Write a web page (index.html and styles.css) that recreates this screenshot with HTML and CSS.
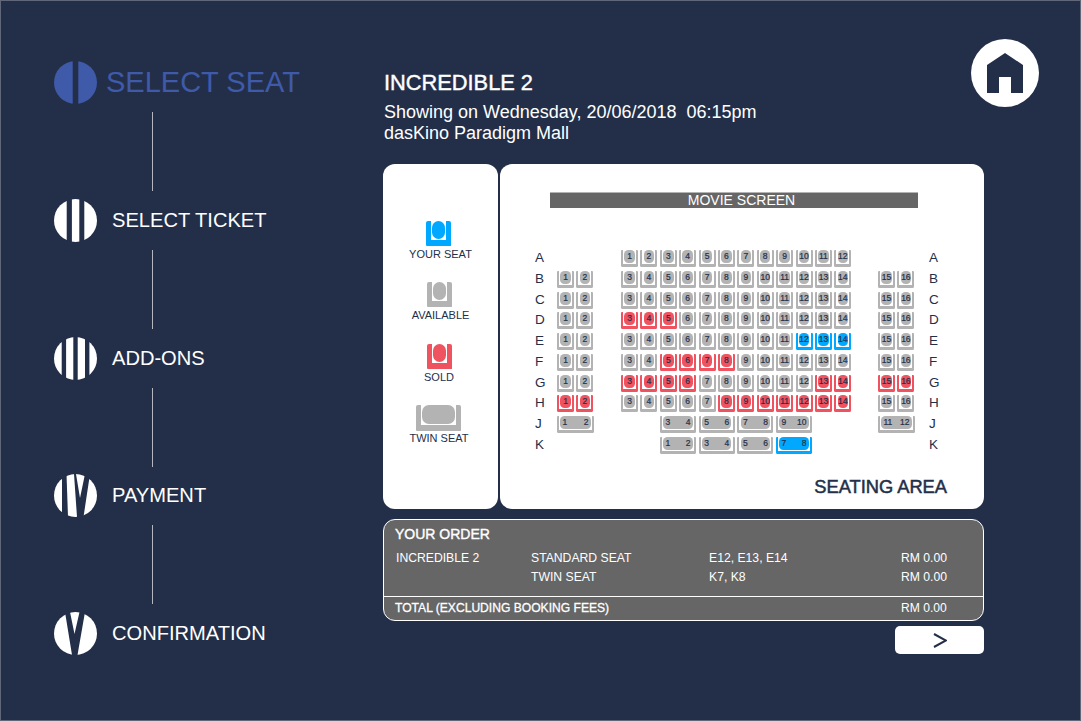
FILE: index.html
```html
<!DOCTYPE html>
<html>
  <head>
    <meta charset="utf-8">
    <title>Select Seat</title>
    <link rel="stylesheet" href="styles.css">
  </head>
  <body>
    <div class="page">
      <ul class="steps">
        <li class="step current">
          <svg class="step-icon" viewBox="0 0 43 43"><circle cx="21.5" cy="21.5" r="21.5"/><rect class="cut" x="18.7" width="5.6" height="43"/></svg>
          <span>SELECT SEAT</span>
        </li>
        <li class="step-line"></li>
        <li class="step">
          <svg class="step-icon" viewBox="0 0 43 43"><circle cx="21.5" cy="21.5" r="21.5"/><rect class="cut" x="12.7" width="5.2" height="43"/><rect class="cut" x="25.3" width="5" height="43"/></svg>
          <span>SELECT TICKET</span>
        </li>
        <li class="step-line"></li>
        <li class="step">
          <svg class="step-icon" viewBox="0 0 43 43"><circle cx="21.5" cy="21.5" r="21.5"/><rect class="cut" x="7.7" width="4.4" height="43"/><rect class="cut" x="19.3" width="4.4" height="43"/><rect class="cut" x="31" width="4.4" height="43"/></svg>
          <span>ADD-ONS</span>
        </li>
        <li class="step-line"></li>
        <li class="step">
          <svg class="step-icon" viewBox="0 0 43 43"><circle cx="21.5" cy="21.5" r="21.5"/><polygon class="cut" points="8,0 12.5,0 14,43 8,43"/><polygon class="cut" points="20,0 22,0 26,24 31,0 36,0 29.5,43 23,43"/></svg>
          <span>PAYMENT</span>
        </li>
        <li class="step-line"></li>
        <li class="step">
          <svg class="step-icon" viewBox="0 0 43 43"><circle cx="21.5" cy="21.5" r="21.5"/><polygon class="cut" points="11,0 16,0 20.5,22 25.5,0 31,0 23.5,43 18,43"/></svg>
          <span>CONFIRMATION</span>
        </li>
      </ul>

      <div class="content">
        <div class="header">
          <div class="movie">
            <h1>INCREDIBLE 2</h1>
            <p>Showing on Wednesday, 20/06/2018  06:15pm</p>
            <p>dasKino Paradigm Mall</p>
          </div>
          <svg class="home" viewBox="0 0 68 68"><circle cx="34" cy="34" r="34" fill="#fff"/><path d="M16 26 34 14 52 26V54H40V38H28V54H16Z" fill="#232f49"/></svg>
        </div>

        <div class="panels">
          <div class="legend">
            <div class="legend-item"><div class="seat big mine"></div><label>YOUR SEAT</label></div>
            <div class="legend-item"><div class="seat big"></div><label>AVAILABLE</label></div>
            <div class="legend-item"><div class="seat big sold"></div><label class="shift">SOLD</label></div>
            <div class="legend-item"><div class="seat big-twin"></div><label class="shift">TWIN SEAT</label></div>
          </div>

          <div class="map">
            <div class="screen">MOVIE SCREEN</div>
            <div class="rows">
              <div class="row">
                <b>A</b><div class="left"></div>
                <div class="mid"><div class="seat">1</div><div class="seat">2</div><div class="seat">3</div><div class="seat">4</div><div class="seat">5</div><div class="seat">6</div><div class="seat">7</div><div class="seat">8</div><div class="seat">9</div><div class="seat">10</div><div class="seat">11</div><div class="seat">12</div></div>
                <div class="right"></div><b>A</b>
              </div>
              <div class="row">
                <b>B</b><div class="left"><div class="seat">1</div><div class="seat">2</div></div>
                <div class="mid"><div class="seat">3</div><div class="seat">4</div><div class="seat">5</div><div class="seat">6</div><div class="seat">7</div><div class="seat">8</div><div class="seat">9</div><div class="seat">10</div><div class="seat">11</div><div class="seat">12</div><div class="seat">13</div><div class="seat">14</div></div>
                <div class="right"><div class="seat">15</div><div class="seat">16</div></div><b>B</b>
              </div>
              <div class="row">
                <b>C</b><div class="left"><div class="seat">1</div><div class="seat">2</div></div>
                <div class="mid"><div class="seat">3</div><div class="seat">4</div><div class="seat">5</div><div class="seat">6</div><div class="seat">7</div><div class="seat">8</div><div class="seat">9</div><div class="seat">10</div><div class="seat">11</div><div class="seat">12</div><div class="seat">13</div><div class="seat">14</div></div>
                <div class="right"><div class="seat">15</div><div class="seat">16</div></div><b>C</b>
              </div>
              <div class="row">
                <b>D</b><div class="left"><div class="seat">1</div><div class="seat">2</div></div>
                <div class="mid"><div class="seat sold">3</div><div class="seat sold">4</div><div class="seat sold">5</div><div class="seat">6</div><div class="seat">7</div><div class="seat">8</div><div class="seat">9</div><div class="seat">10</div><div class="seat">11</div><div class="seat">12</div><div class="seat">13</div><div class="seat">14</div></div>
                <div class="right"><div class="seat">15</div><div class="seat">16</div></div><b>D</b>
              </div>
              <div class="row">
                <b>E</b><div class="left"><div class="seat">1</div><div class="seat">2</div></div>
                <div class="mid"><div class="seat">3</div><div class="seat">4</div><div class="seat">5</div><div class="seat">6</div><div class="seat">7</div><div class="seat">8</div><div class="seat">9</div><div class="seat">10</div><div class="seat">11</div><div class="seat mine">12</div><div class="seat mine">13</div><div class="seat mine">14</div></div>
                <div class="right"><div class="seat">15</div><div class="seat">16</div></div><b>E</b>
              </div>
              <div class="row">
                <b>F</b><div class="left"><div class="seat">1</div><div class="seat">2</div></div>
                <div class="mid"><div class="seat">3</div><div class="seat">4</div><div class="seat sold">5</div><div class="seat sold">6</div><div class="seat sold">7</div><div class="seat sold">8</div><div class="seat">9</div><div class="seat">10</div><div class="seat">11</div><div class="seat">12</div><div class="seat">13</div><div class="seat">14</div></div>
                <div class="right"><div class="seat">15</div><div class="seat">16</div></div><b>F</b>
              </div>
              <div class="row">
                <b>G</b><div class="left"><div class="seat">1</div><div class="seat">2</div></div>
                <div class="mid"><div class="seat sold">3</div><div class="seat sold">4</div><div class="seat sold">5</div><div class="seat sold">6</div><div class="seat">7</div><div class="seat">8</div><div class="seat">9</div><div class="seat">10</div><div class="seat">11</div><div class="seat">12</div><div class="seat sold">13</div><div class="seat sold">14</div></div>
                <div class="right"><div class="seat sold">15</div><div class="seat sold">16</div></div><b>G</b>
              </div>
              <div class="row">
                <b>H</b><div class="left"><div class="seat sold">1</div><div class="seat sold">2</div></div>
                <div class="mid"><div class="seat">3</div><div class="seat">4</div><div class="seat">5</div><div class="seat">6</div><div class="seat">7</div><div class="seat sold">8</div><div class="seat sold">9</div><div class="seat sold">10</div><div class="seat sold">11</div><div class="seat sold">12</div><div class="seat sold">13</div><div class="seat sold">14</div></div>
                <div class="right"><div class="seat">15</div><div class="seat">16</div></div><b>H</b>
              </div>
              <div class="row">
                <b>J</b><div class="left"><div class="seat twin"><i>1</i><i>2</i></div></div>
                <div class="mid twins"><div class="seat twin"><i>3</i><i>4</i></div><div class="seat twin"><i>5</i><i>6</i></div><div class="seat twin"><i>7</i><i>8</i></div><div class="seat twin"><i>9</i><i>10</i></div></div>
                <div class="right"><div class="seat twin"><i>11</i><i>12</i></div></div><b>J</b>
              </div>
              <div class="row">
                <b>K</b><div class="left"></div>
                <div class="mid twins"><div class="seat twin"><i>1</i><i>2</i></div><div class="seat twin"><i>3</i><i>4</i></div><div class="seat twin"><i>5</i><i>6</i></div><div class="seat twin mine"><i>7</i><i>8</i></div></div>
                <div class="right"></div><b>K</b>
              </div>
            </div>
            <div class="area">SEATING AREA</div>
          </div>
        </div>

        <div class="order">
          <h2>YOUR ORDER</h2>
          <div class="order-lines">
            <span>INCREDIBLE 2</span><span>STANDARD SEAT</span><span>E12, E13, E14</span><span>RM 0.00</span>
            <span></span><span>TWIN SEAT</span><span>K7, K8</span><span>RM 0.00</span>
          </div>
          <div class="order-total">
            <strong>TOTAL (EXCLUDING BOOKING FEES)</strong><span>RM 0.00</span>
          </div>
        </div>

        <button class="next">
          <svg viewBox="0 0 14 15" width="14" height="15"><path d="M1 1 13 7.5 1 14" fill="none" stroke="#232f49" stroke-width="2"/></svg>
        </button>
      </div>
    </div>
  </body>
</html>
```

FILE: styles.css
```css
* {
  box-sizing: border-box;
}

body {
  margin: 0;
  font-family: "Liberation Sans", Arial, sans-serif;
  color: #fff;
}

.page {
  display: flex;
  width: 1081px;
  height: 721px;
  padding-top: 1px;
  background: #232f49;
  box-shadow: inset 0 0 0 1px #5f6778;
  overflow: hidden;
}

/* left column */
.steps {
  width: 383px;
  margin: 0;
  padding: 60px 0 0 54px;
  list-style: none;
}

.step {
  display: flex;
  align-items: center;
  gap: 15px;
  height: 43px;
  font-size: 20.1px;
}

.step-icon {
  width: 43px;
  height: 43px;
  flex: none;
  fill: #fff;
}

.step-icon .cut {
  fill: #232f49;
}

.step.current {
  gap: 9px;
  font-size: 29px;
  color: #3f5aa9;
}

.step.current .step-icon {
  fill: #3f5aa9;
}

.step-line {
  width: 1px;
  height: 79px;
  margin: 8px 0 7.75px 98px;
  background: #b4b7bf;
}

/* right column */
.content {
  width: 656px;
}

.header {
  display: flex;
  justify-content: space-between;
  align-items: flex-start;
  height: 163px;
  padding-top: 38px;
}

.movie {
  padding: 31px 0 0 1px;
}

.movie h1 {
  margin: 0 0 6px;
  font-size: 21.8px;
  line-height: 26px;
  font-weight: normal;
  -webkit-text-stroke: 0.4px #fff;
}

.movie p {
  margin: 0;
  font-size: 18px;
  line-height: 21px;
  white-space: pre;
}

.home {
  width: 68px;
  height: 68px;
}

.panels {
  display: flex;
  gap: 2px;
  width: 601px;
  height: 345px;
  color: #232f49;
}

.legend {
  display: flex;
  flex-direction: column;
  align-items: center;
  width: 115px;
  padding-top: 57px;
  background: #fff;
  border-radius: 12px;
}

.legend-item {
  display: flex;
  flex-direction: column;
  align-items: center;
  height: 61.3px;
}

.legend-item label {
  font-size: 11px;
  line-height: 16px;
}

.legend-item label.shift {
  margin-left: -3px;
}

.map {
  flex: 1;
  padding-top: 28px;
  background: #fff;
  border-radius: 12px;
}

.screen {
  width: 368px;
  height: 16px;
  margin-left: 50px;
  padding-left: 15px;
  background: #666;
  border-top: 1px solid #b3b3b3;
  color: #fff;
  font-size: 14px;
  line-height: 15px;
  text-align: center;
}

.rows {
  display: flex;
  flex-direction: column;
  gap: 3.75px;
  margin: 42px 0 0 35px;
}

.row {
  display: flex;
  height: 17px;
}

.row b {
  width: 22px;
  font-size: 13.5px;
  font-weight: normal;
  line-height: 15px;
}

.row .right + b {
  width: 20px;
  margin-left: 14px;
}

.left,
.right,
.mid {
  display: flex;
  gap: 2.4px;
}

.left,
.right {
  width: 37px;
}

.mid {
  width: 230.4px;
  margin: 0 26.6px 0 27px;
}

.mid.twins {
  gap: 2.7px;
  padding-left: 39px;
}

.seat {
  --seat: #b3b3b3;
  position: relative;
  z-index: 0;
  flex: none;
  width: 17px;
  height: 17px;
  border: solid var(--seat);
  border-width: 0 2.5px 3px;
  border-radius: 1px 1px 1.5px 1.5px;
  font-size: 8.5px;
  line-height: 13px;
  text-align: center;
  -webkit-text-stroke: 0.2px #232f49;
}

.seat::before {
  content: "";
  position: absolute;
  top: 0;
  left: 1.25px;
  right: 1.25px;
  bottom: 1px;
  z-index: -1;
  border-radius: 4.5px;
  background: var(--seat);
}

.seat.sold {
  --seat: #ef5360;
}

.seat.mine {
  --seat: #00a9ff;
}

.seat.twin {
  display: flex;
  justify-content: space-between;
  width: 36px;
  padding: 0 3.5px;
}

.left .seat.twin,
.right .seat.twin {
  width: 37px;
}

.seat i {
  font-style: normal;
}

.seat.big,
.seat.big-twin {
  width: 25px;
  height: 25px;
  margin-right: 3px;
  border-width: 0 5px 6px;
  border-radius: 2px 2px 1px 1px;
}

.seat.big-twin {
  width: 45px;
  height: 26px;
  margin-bottom: -1px;
}

.seat.big::before,
.seat.big-twin::before {
  left: 1px;
  right: 1px;
  border-radius: 7px;
}

.area {
  margin-top: 22px;
  padding-right: 37px;
  font-size: 18.3px;
  line-height: 21px;
  text-align: right;
  -webkit-text-stroke: 0.5px #232f49;
}

.order {
  width: 601px;
  height: 102px;
  margin-top: 10px;
  background: #666;
  border: 1px solid #fff;
  border-radius: 12px;
  font-size: 12.2px;
}

.order h2 {
  margin: 0;
  padding: 6px 0 0 11px;
  font-size: 14px;
  line-height: 17px;
  font-weight: normal;
  -webkit-text-stroke: 0.4px #fff;
}

.order-lines {
  display: grid;
  grid-template-columns: 135px 178px 192px auto;
  grid-auto-rows: 19px;
  height: 53px;
  padding: 6px 0 0 12px;
  line-height: 19px;
}

.order-total {
  display: grid;
  grid-template-columns: 505px auto;
  height: 24px;
  padding: 2px 0 0 11px;
  border-top: 1px solid #fff;
  font-size: 12.1px;
  line-height: 19px;
}

.order-total span {
  padding-left: 1px;
}

.order-total strong {
  font-weight: normal;
  -webkit-text-stroke: 0.3px #fff;
}

.next {
  display: flex;
  align-items: center;
  justify-content: center;
  width: 89px;
  height: 28px;
  margin: 5px 0 0 512px;
  padding: 0;
  border: 0;
  border-radius: 5px;
  background: #fff;
}
```
